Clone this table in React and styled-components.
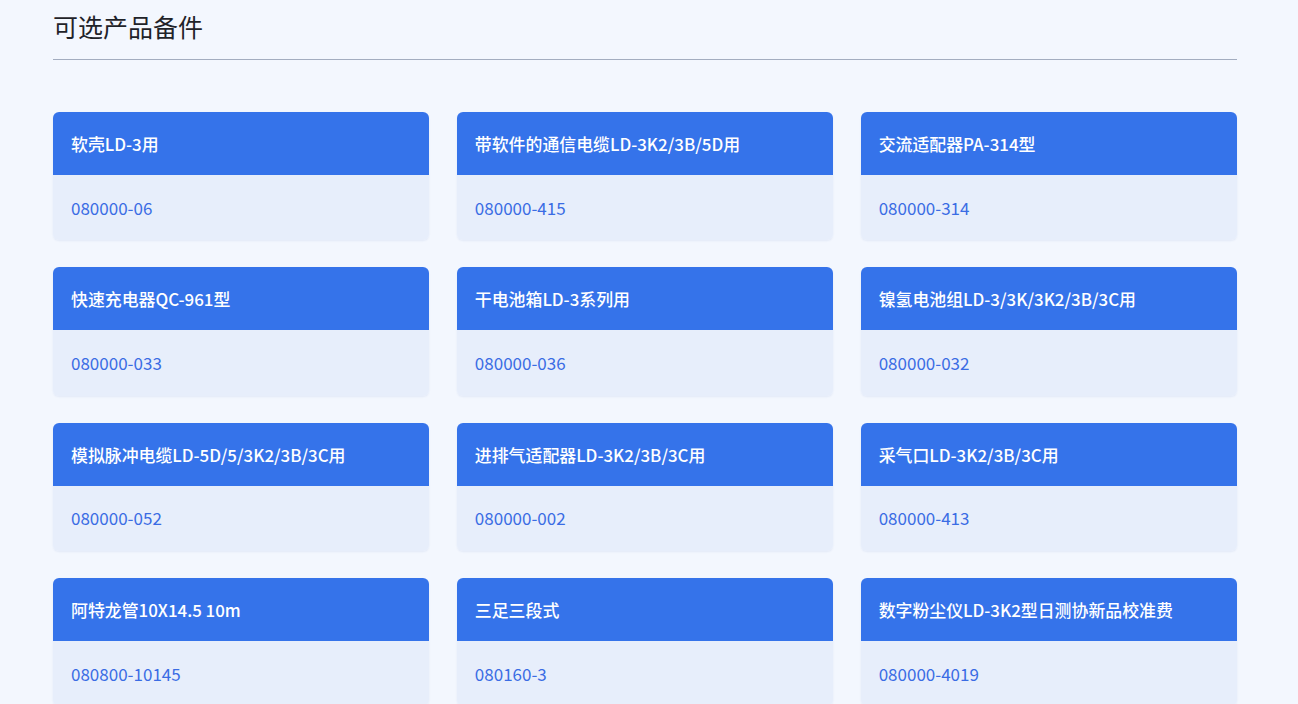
import React from 'react'
import styled, { createGlobalStyle } from 'styled-components'

const GlobalStyle = createGlobalStyle`
body{
    margin: 0;
    background-color: #f3f7fe;
    font-family: "Noto Sans CJK SC", "Noto Sans", sans-serif;
}
`

const parts = [
    { name: '软壳LD-3用', code: '080000-06' },
    { name: '带软件的通信电缆LD-3K2/3B/5D用', code: '080000-415' },
    { name: '交流适配器PA-314型', code: '080000-314' },
    { name: '快速充电器QC-961型', code: '080000-033' },
    { name: '干电池箱LD-3系列用', code: '080000-036' },
    { name: '镍氢电池组LD-3/3K/3K2/3B/3C用', code: '080000-032' },
    { name: '模拟脉冲电缆LD-5D/5/3K2/3B/3C用', code: '080000-052' },
    { name: '进排气适配器LD-3K2/3B/3C用', code: '080000-002' },
    { name: '采气口LD-3K2/3B/3C用', code: '080000-413' },
    { name: '阿特龙管10X14.5 10m', code: '080800-10145' },
    { name: '三足三段式', code: '080160-3' },
    { name: '数字粉尘仪LD-3K2型日测协新品校准费', code: '080000-4019' },
]

const App = () => {
    return (
        <Container>
            <GlobalStyle/>
            <Title>可选产品备件</Title>
            <Divider/>
            <Grid>
                {parts.map((p)=>(
                    <Card key={p.code}>
                        <CardHead>{p.name}</CardHead>
                        <CardBody>{p.code}</CardBody>
                    </Card>
                ))}
            </Grid>
        </Container>
    )
}

export default App

const Container = styled.div`
width: 1184px;
margin-left: 53px;
display: flex;
flex-direction: column;
`
const Title = styled.h2`
margin: 0;
font-size: 25px;
font-weight: 400;
line-height: 52px;
color: #1f2329;
`
const Divider = styled.div`
height: 1px;
background-color: #a3adc0;
margin-top: 7px;
`
const Grid = styled.div`
display: grid;
grid-template-columns: repeat(3, 1fr);
column-gap: 27.5px;
row-gap: 27px;
margin-top: 52px;
`
const Card = styled.div`
border-radius: 6px;
overflow: hidden;
box-shadow: 0 1px 2px rgba(40, 80, 160, 0.08);
display: flex;
flex-direction: column;
`
const CardHead = styled.div`
height: 63px;
background-color: #3573ea;
color: #ffffff;
font-size: 16.9px;
font-weight: 500;
display: flex;
align-items: center;
padding-left: 18px;
`
const CardBody = styled.div`
height: 65.3px;
background-color: #e7eefb;
color: #3a6ce4;
font-size: 17px;
display: flex;
align-items: center;
padding-left: 18px;
padding-bottom: 1px;
box-sizing: border-box;
`
